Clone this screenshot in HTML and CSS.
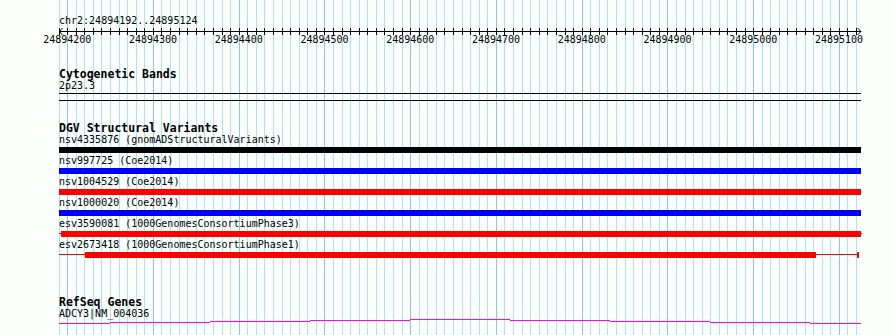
FILE: index.html
```html
<!DOCTYPE html>
<html>
<head>
  <link rel="stylesheet" href="styles.css">
</head>
<body>

  <div class="view">
    <div class="tracks">

      <!-- Ruler -->
      <div class="ruler">
        <div class="loc">chr2:24894192..24895124</div>
        <div class="scale">
          <svg class="arrow arrow-left" width="4" height="7"><polyline points="3.5,0 0.5,3.5 3.5,7" fill="none" stroke="#000" stroke-width="1"/></svg>
          <svg class="arrow arrow-right" width="5" height="7"><polyline points="0.5,0 4,3.5 0.5,7" fill="none" stroke="#000" stroke-width="1"/></svg>
        </div>
        <div class="labels">
          <span>24894200</span>
          <span>24894300</span>
          <span>24894400</span>
          <span>24894500</span>
          <span>24894600</span>
          <span>24894700</span>
          <span>24894800</span>
          <span>24894900</span>
          <span>24895000</span>
          <span>24895100</span>
        </div>
      </div>

      <!-- Cytogenetic bands -->
      <div class="track track-cyto">
        <div class="track-title">Cytogenetic Bands</div>
        <div class="feature-label">2p23.3</div>
        <div class="band"></div>
      </div>

      <!-- DGV -->
      <div class="track track-dgv">
        <div class="track-title">DGV Structural Variants</div>

        <div class="feature">
          <div class="feature-label">nsv4335876 (gnomADStructuralVariants)</div>
          <div class="bar"><div class="thick black full"></div></div>
        </div>
        <div class="feature">
          <div class="feature-label">nsv997725 (Coe2014)</div>
          <div class="bar"><div class="thick blue full"></div></div>
        </div>
        <div class="feature">
          <div class="feature-label">nsv1004529 (Coe2014)</div>
          <div class="bar"><div class="thick red full"></div></div>
        </div>
        <div class="feature">
          <div class="feature-label">nsv1000020 (Coe2014)</div>
          <div class="bar"><div class="thick blue full"></div></div>
        </div>
        <div class="feature">
          <div class="feature-label">esv3590081 (1000GenomesConsortiumPhase3)</div>
          <div class="bar">
            <div class="thin red" style="width: 2px"></div>
            <div class="thick red" style="width: 800px"></div>
            <div class="thin red" style="width: 1px"></div>
          </div>
        </div>
        <div class="feature">
          <div class="feature-label">esv2673418 (1000GenomesConsortiumPhase1)</div>
          <div class="bar">
            <div class="thin red" style="width: 26px"></div>
            <div class="thick red" style="width: 731px"></div>
            <div class="thin red" style="width: 41px"></div>
            <div class="thick red" style="width: 2px"></div>
          </div>
        </div>
      </div>

      <!-- RefSeq -->
      <div class="track track-refseq">
        <div class="track-title">RefSeq Genes</div>
        <div class="feature-label">ADCY3|NM_004036</div>
        <svg class="gene" width="802" height="6" fill="#ff00ff">
          <rect x="0" y="4" width="51" height="1"/>
          <rect x="51" y="3" width="100" height="1"/>
          <rect x="151" y="2" width="100" height="1"/>
          <rect x="251" y="1" width="100" height="1"/>
          <rect x="351" y="0" width="100" height="1"/>
          <rect x="451" y="1" width="100" height="1"/>
          <rect x="551" y="2" width="100" height="1"/>
          <rect x="651" y="3" width="100" height="1"/>
          <rect x="751" y="4" width="51" height="1"/>
        </svg>
      </div>

    </div>
  </div>

</body>
</html>
```

FILE: styles.css
```css
body {
  margin: 0;
  background: #fcfefc;
  color: #000;
  font-family: "DejaVu Sans Mono", monospace;
  font-size: 10px;
}

.view {
  display: flex;
  padding-left: 59px;
  height: 335px;
  overflow: hidden;
}

/* grid lines: minor every 10bp, major every 100bp */
.tracks {
  width: 802px;
  height: 335px;
  background:
    repeating-linear-gradient(to right, transparent 0 8.175px, #88c8ec 8.175px 9.175px, transparent 9.175px 85.75px),
    repeating-linear-gradient(to right, #a8eaea 0 0.6px, transparent 0.6px 8.175px, #a8eaea 8.175px 8.575px);
}

/* ruler */
.ruler {
  padding-top: 15px;
}

.loc {
  line-height: 12px;
}

.scale {
  position: relative;
  margin-top: 1px;
  height: 7px;
  background:
    linear-gradient(#000, #000) 0 3px / 100% 1px no-repeat,
    repeating-linear-gradient(to right, #000 0 0.6px, transparent 0.6px 8.175px, #000 8.175px 8.575px);
}

.arrow {
  position: absolute;
  top: 0;
  display: block;
}

.arrow-left {
  left: 0;
}

.arrow-right {
  right: -1px;
}

.labels {
  display: flex;
  margin-top: -1px;
  margin-left: -34.6px;
  line-height: 11px;
}

.labels span {
  flex: 0 0 85.75px;
  text-align: center;
}

/* tracks */
.track-title {
  font-weight: bold;
  font-size: 11.5px;
  line-height: 12px;
}

.feature-label {
  line-height: 11px;
  white-space: nowrap;
}

.track-cyto {
  margin-top: 23px;
}

.band {
  margin-top: 2px;
  height: 6px;
  border-top: 1px solid #000;
  border-bottom: 1px solid #000;
}

.track-dgv {
  margin-top: 21px;
}

.feature {
  padding-bottom: 2px;
}

.bar {
  display: flex;
  margin-top: 2px;
  height: 6px;
}

.thick {
  flex-shrink: 0;
  height: 6px;
}

.thick.full {
  width: 100%;
}

.thin {
  flex-shrink: 0;
  height: 1px;
  margin-top: 2px;
}

.black { background: #000; }
.blue { background: #0000ff; }
.red { background: #ff0000; }

.track-refseq {
  margin-top: 36px;
}

.gene {
  display: block;
  shape-rendering: crispEdges;
}
```
